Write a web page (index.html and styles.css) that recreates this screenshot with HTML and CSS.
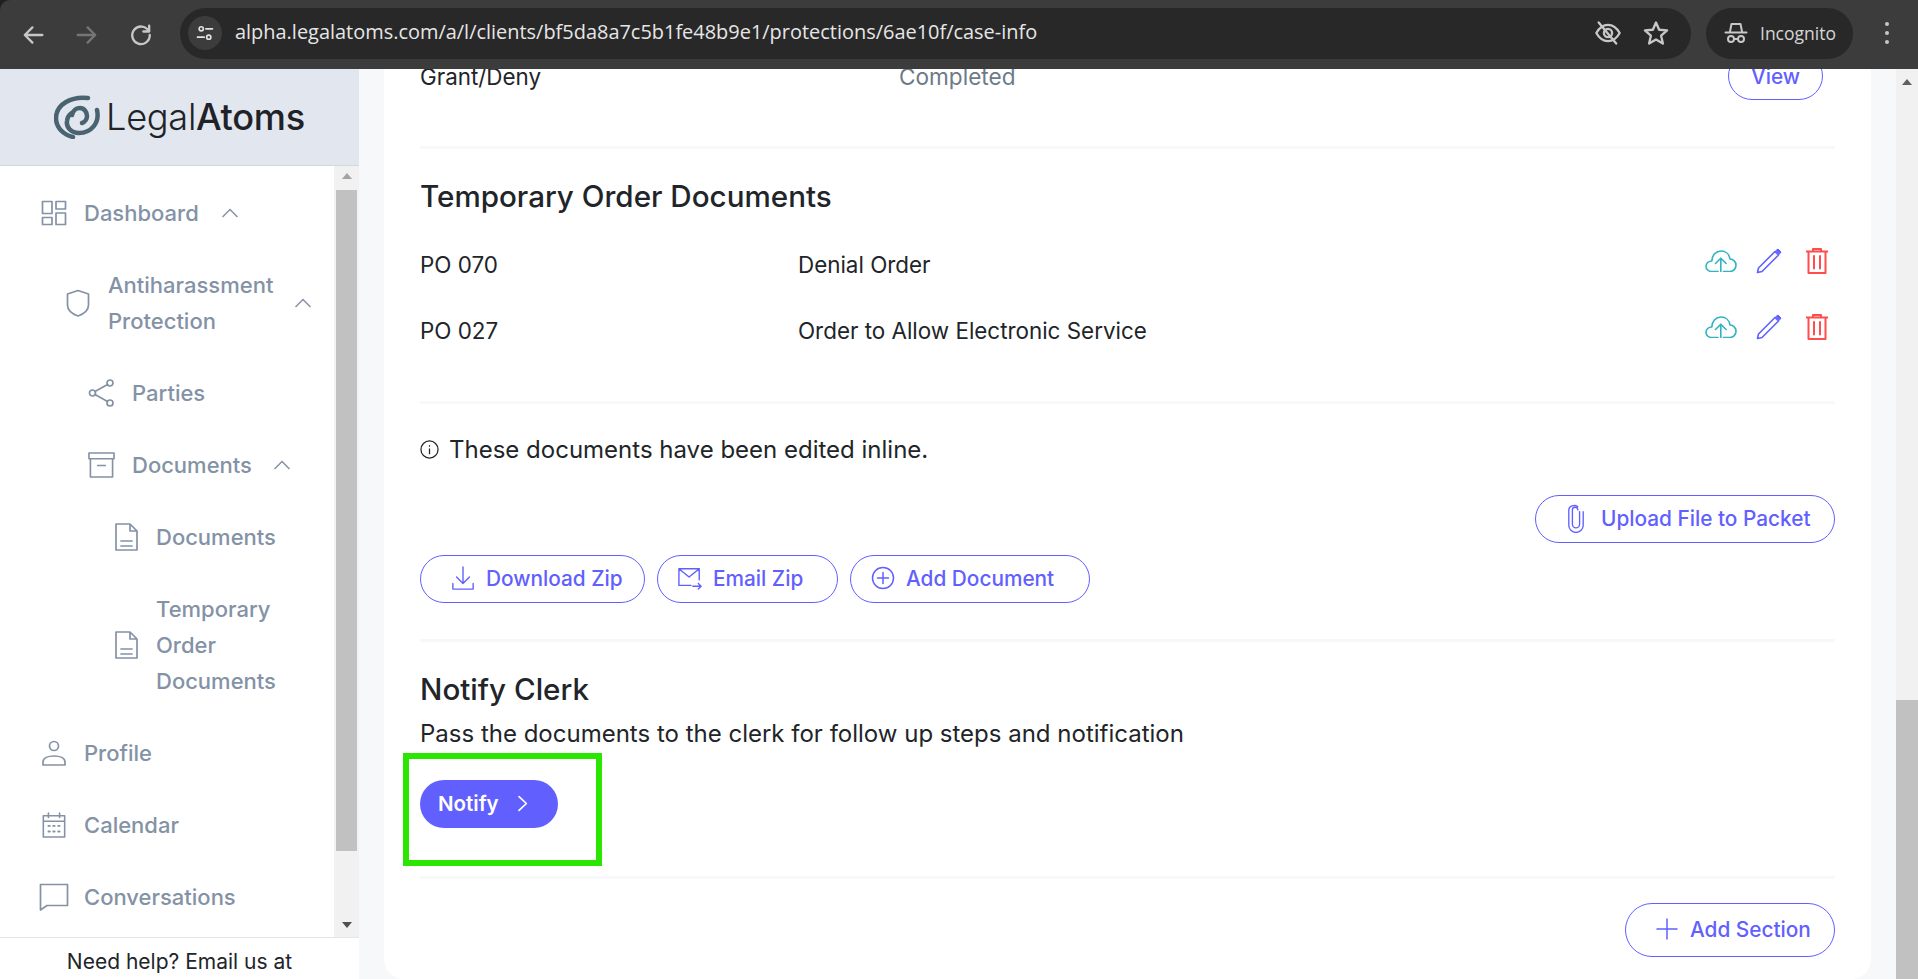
FILE: index.html
```html
<!DOCTYPE html>
<html lang="en">
<head>
<meta charset="utf-8">
<title>LegalAtoms</title>
<link rel="stylesheet" href="styles.css">
</head>
<body>
<header class="browser">
  <div class="nav-icons">
    <svg class="bi" viewBox="0 0 24 24"><path d="M20 12H5M11.500 5.500 5 12l6.500 6.500"/></svg>
    <svg class="bi dim" viewBox="0 0 24 24"><path d="M4 12h15M12.500 5.500 19 12l-6.500 6.500"/></svg>
    <svg class="bi" viewBox="0 0 24 24"><path d="M18.500 8.500A7.500 7.500 0 1 0 19.500 12M19 4v5h-5"/></svg>
  </div>
  <div class="omnibox">
    <span class="site-info"><svg class="bi small" viewBox="0 0 24 24"><circle cx="7.500" cy="7" r="2.500"/><path d="M13 7h8M3 17h8"/><circle cx="16.500" cy="17" r="2.500"/></svg></span>
    <span class="url">alpha.legalatoms.com/a/l/clients/bf5da8a7c5b1fe48b9e1/protections/6ae10f/case-info</span>
    <svg class="bi eye" viewBox="0 0 24 24"><path d="M2 12c2.500-4.500 6-7 10-7s7.500 2.500 10 7c-2.500 4.500-6 7-10 7s-7.500-2.500-10-7Z"/><circle cx="12" cy="12" r="3.500"/><path d="M4 3l15 18"/></svg>
    <svg class="bi star" viewBox="0 0 24 24"><path d="m12 3 2.700 6.200 6.800.6-5.100 4.500 1.500 6.700-5.900-3.500L6.100 21l1.500-6.700-5.100-4.500 6.800-.6Z"/></svg>
  </div>
  <div class="incognito">
    <svg class="bi hat" viewBox="0 0 24 24"><path d="M1.500 11.500h21M6 10.500 7.500 3h9l1.500 7.500"/><circle cx="7" cy="18" r="3"/><circle cx="17" cy="18" r="3"/><path d="M10 18h4"/></svg>
    <span>Incognito</span>
  </div>
  <div class="kebab"><i></i><i></i><i></i></div>
</header>

<div class="app">
  <aside class="sidebar">
    <div class="logo">
      <svg class="logo-mark" viewBox="0 0 46 44"><path d="M34 3C18 1 2 9 2 23c0 10 8 17 17 19"/><path d="M43 15c3 13-6 23-18 23-8 0-13-6-12-12 .5-4 2-6 4-7.500"/><path d="M18 20c1-5 5-7 8-7 4 0 7 4 7 8 0 3-2 6-5 7"/></svg>
      <span class="logo-text">Legal<b>Atoms</b></span>
    </div>
    <div class="nav-wrap">
      <nav class="nav">
        <a class="item l1"><svg class="ico" viewBox="0 0 26 26"><path d="M1.500 1.500h9.500v12H1.500ZM15 1.500h9.500v7.500H15ZM1.500 17.500h9.500v7H1.500ZM15 13h9.500v11.500H15Z"/></svg><span>Dashboard</span><svg class="chev" viewBox="0 0 16 10"><path d="M.500 9 8 1.500 15.500 9"/></svg></a>
        <a class="item l2"><svg class="ico shield" viewBox="0 0 24 28"><path d="M12 1.500 1.500 5v11c0 5 5 9 10.500 11 5.500-2 10.500-6 10.500-11V5Z"/></svg><span>Antiharassment<br>Protection</span><svg class="chev" viewBox="0 0 16 10"><path d="M.500 9 8 1.500 15.500 9"/></svg></a>
        <a class="item l3"><svg class="ico" viewBox="0 0 26 28"><circle cx="4" cy="14" r="3"/><circle cx="21.500" cy="4" r="3"/><circle cx="21.500" cy="24" r="3"/><path d="M6.500 12.500 19 5.500M6.500 15.500l12.500 7"/></svg><span>Parties</span></a>
        <a class="item l3"><svg class="ico" viewBox="0 0 28 28"><path d="M1 1.500h26v6H1ZM2.500 7.500v19h23v-19M10 14.500h8"/></svg><span>Documents</span><svg class="chev" viewBox="0 0 16 10"><path d="M.500 9 8 1.500 15.500 9"/></svg></a>
        <a class="item l4"><svg class="ico doc" viewBox="0 0 23 28"><path d="M1 1h14l7 7v19H1ZM15 1v7h7M6 18h11M6 23h11"/></svg><span>Documents</span></a>
        <a class="item l4"><svg class="ico doc" viewBox="0 0 23 28"><path d="M1 1h14l7 7v19H1ZM15 1v7h7M6 18h11M6 23h11"/></svg><span>Temporary<br>Order<br>Documents</span></a>
        <a class="item l1"><svg class="ico" viewBox="0 0 26 26"><circle cx="13" cy="6" r="4.500"/><path d="M2 25v-3c0-4 5-6 11-6s11 2 11 6v3Z"/></svg><span>Profile</span></a>
        <a class="item l1"><svg class="ico" viewBox="0 0 26 28"><path d="M1.500 4h23v23h-23ZM1.500 10h23M7 1v5M19 1v5"/><path class="dots" d="M7 15h1.500M12.200 15h1.500M17.500 15h1.500M7 21h1.500M12.200 21h1.500M17.500 21h1.500"/></svg><span>Calendar</span></a>
        <a class="item l1"><svg class="ico wide" viewBox="0 0 30 28"><path d="M1.500 1.500h27v21H8L1.500 27Z"/></svg><span>Conversations</span></a>
      </nav>
      <div class="side-scroll">
        <span class="arrow up"></span>
        <span class="thumb"></span>
        <span class="arrow down"></span>
      </div>
    </div>
    <div class="help">Need help? Email us at</div>
  </aside>

  <main class="main">
    <div class="card">
      <div class="status-row">
        <span class="col-a">Grant/Deny</span>
        <span class="col-b">Completed</span>
        <a class="btn view">View</a>
      </div>
      <hr class="rule rule-a">
      <h2 class="title t-order">Temporary Order Documents</h2>
      <div class="doc-row">
        <span class="doc-code">PO 070</span><span class="doc-name">Denial Order</span>
        <span class="doc-actions">
          <svg class="act cloud" viewBox="0 0 32 22.500"><path class="teal" d="M13 21.500H6.500C3.500 21.500 1 19.200 1 16.300 1 13.300 3.500 11 6.800 11 7 5.200 11 1 16 1c4.800 0 8.300 3.300 9 8 3.300 0 6 2.800 6 6.200 0 3.500-2.700 6.300-6 6.300h-6.500M15.800 21.500V9M10.500 13.500l5.300-5.300 5.300 5.300"/></svg>
          <svg class="act pen" viewBox="0 0 26 26"><path class="purple" d="M1.500 24.500 2.500 20 19 3.500l3.500 3.500L6 23.500Z"/><path class="purple-fill" d="M20 2.500 22 1l3 3-1.500 2Z"/></svg>
          <svg class="act bin" viewBox="0 0 22 26"><path class="red" d="M.500 3.500h21M7 3.500V1h8v2.500M2.500 3.500V25h17V3.500M8 8v12.500M14 8v12.500"/></svg>
        </span>
      </div>
      <div class="doc-row">
        <span class="doc-code">PO 027</span><span class="doc-name">Order to Allow Electronic Service</span>
        <span class="doc-actions">
          <svg class="act cloud" viewBox="0 0 32 22.500"><path class="teal" d="M13 21.500H6.500C3.500 21.500 1 19.200 1 16.300 1 13.300 3.500 11 6.800 11 7 5.200 11 1 16 1c4.800 0 8.300 3.300 9 8 3.300 0 6 2.800 6 6.200 0 3.500-2.700 6.300-6 6.300h-6.500M15.800 21.500V9M10.500 13.500l5.300-5.300 5.300 5.300"/></svg>
          <svg class="act pen" viewBox="0 0 26 26"><path class="purple" d="M1.500 24.500 2.500 20 19 3.500l3.500 3.500L6 23.500Z"/><path class="purple-fill" d="M20 2.500 22 1l3 3-1.500 2Z"/></svg>
          <svg class="act bin" viewBox="0 0 22 26"><path class="red" d="M.500 3.500h21M7 3.500V1h8v2.500M2.500 3.500V25h17V3.500M8 8v12.500M14 8v12.500"/></svg>
        </span>
      </div>
      <hr class="rule rule-b">
      <p class="info"><svg class="info-ico" viewBox="0 0 20 20"><circle cx="10" cy="10" r="9"/><path d="M10 9v6M10 5.500v1.500"/></svg>These documents have been edited inline.</p>
      <div class="upload-row">
        <a class="btn upload"><svg class="btn-ico clip" viewBox="0 0 20 30"><path d="M14 8v14a4 4 0 0 1-8 0V6a3 3 0 0 1 6 0" /><path d="M18 8v15a8 8 0 0 1-16 0V6a6 5 0 0 1 10-3.500"/></svg>Upload File to Packet</a>
      </div>
      <div class="btn-row">
        <a class="btn download"><svg class="btn-ico" viewBox="0 0 24 26"><path d="M12 1v17M5 12l7 7 7-7M1 19v6h22v-6"/></svg>Download Zip</a>
        <a class="btn email"><svg class="btn-ico" viewBox="0 0 26 26"><path d="M14 21H1V3h22v12M1 3l11 9 11-9M16 22h9M22 19l3 3-3 3"/></svg>Email Zip</a>
        <a class="btn add"><svg class="btn-ico" viewBox="0 0 24 24"><circle cx="12" cy="12" r="10.500"/><path d="M12 6.500v11M6.500 12h11"/></svg>Add Document</a>
      </div>
      <hr class="rule rule-c">
      <h2 class="title t-clerk">Notify Clerk</h2>
      <p class="lead">Pass the documents to the clerk for follow up steps and notification</p>
      <div class="notify-wrap">
        <a class="btn-solid">Notify<svg class="next" viewBox="0 0 10 15"><path d="M1.500 1.500 8 7.500l-6.500 6"/></svg></a>
        <span class="highlight"></span>
      </div>
      <hr class="rule rule-d">
      <div class="section-row">
        <a class="btn section"><svg class="btn-ico plus" viewBox="0 0 22 22"><path d="M11 1v20M1 11h20"/></svg>Add Section</a>
      </div>
    </div>
  </main>

  <div class="page-scroll">
    <span class="arrow up"></span>
    <span class="page-thumb"></span>
  </div>
</div>
</body>
</html>
```
FILE: styles.css
```css
* { box-sizing: border-box; }
html, body { margin: 0; height: 100%; overflow: hidden; }
body {
  width: 1918px;
  height: 979px;
  display: flex;
  flex-direction: column;
  font-family: Inter, "Liberation Sans", sans-serif;
  color: #212529;
  background: #202020;
}

/* Browser chrome */
.browser {
  height: 69px;
  flex: none;
  display: flex;
  align-items: center;
  background: #3c3c3c;
  border-radius: 10px 0 0 0;
}
.bi { fill: none; stroke: #c7c7c7; stroke-width: 2; stroke-linecap: round; stroke-linejoin: round; }
.nav-icons { display: flex; gap: 26px; padding-left: 19px; width: 180px; }
.nav-icons .bi { width: 28px; height: 28px; }
.nav-icons .dim { stroke: #757575; }
.omnibox {
  width: 1511px;
  height: 51px;
  margin-top: -3px;
  background: #282828;
  border-radius: 26px;
  display: flex;
  align-items: center;
  padding-left: 8px;
}
.site-info {
  width: 34px; height: 34px;
  border-radius: 50%;
  background: #3c3c3c;
  display: flex; align-items: center; justify-content: center;
}
.small { width: 20px; height: 20px; stroke: #e3e3e3; }
.url {
  margin-left: 13px;
  margin-top: -3px;
  font: 19.950px "Open Sans", "Noto Sans", sans-serif;
  color: #e6e6e6;
  flex: 1;
  white-space: nowrap;
}
.eye { width: 28px; height: 28px; margin-right: 20px; }
.star { width: 28px; height: 28px; margin-right: 21px; }
.incognito {
  margin-left: 15px;
  margin-top: -3px;
  width: 147px;
  height: 51px;
  background: #282828;
  border-radius: 26px;
  display: flex;
  align-items: center;
  padding-left: 18px;
  gap: 12px;
  font: 17.500px "Open Sans", "Noto Sans", sans-serif;
  color: #d6d6d6;
}
.hat { width: 24px; height: 24px; }
.kebab { margin-left: 32px; margin-top: -3px; display: flex; flex-direction: column; gap: 5px; }
.kebab i { width: 4px; height: 4px; border-radius: 50%; background: #c7c7c7; }

/* App frame */
.app { flex: 1; display: flex; min-height: 0; background: #f7f8fa; }

/* Sidebar */
.sidebar {
  width: 359px;
  flex: none;
  display: flex;
  flex-direction: column;
  background: #fff;
}
.logo {
  height: 97px;
  flex: none;
  display: flex;
  align-items: center;
  padding-left: 54px;
  background: #e2e7ef;
  border-bottom: 1px solid #d3d7de;
}
.logo-mark { width: 46px; height: 44px; fill: none; stroke: #4a6371; stroke-width: 4.500; stroke-linecap: round; }
.logo-text { margin-left: 6px; font-size: 36.200px; font-weight: 300; color: #1f2328; letter-spacing: -.3px; }
.logo-text b { font-weight: 500; }
.nav-wrap { flex: 1; min-height: 0; display: flex; border-bottom: 1px solid #e2e7ef; }
.nav {
  flex: 1;
  min-width: 0;
  padding-top: 11px;
  overflow: hidden;
}
.item {
  display: flex;
  align-items: center;
  padding: 18px 0;
  font-size: 22px;
  font-weight: 500;
  line-height: 36px;
  color: #8492a6;
}
.item span { white-space: nowrap; }
.ico { width: 26px; height: 26px; flex: none; fill: none; stroke: #8492a6; stroke-width: 1.700; stroke-linejoin: round; stroke-linecap: round; }
.ico .dots { stroke-width: 2; }
.l1 { padding-left: 41px; }
.l1 .ico { margin-right: 17px; }
.l1 .chev { margin-left: 23px; }
.l2 { padding-left: 66px; }
.l2 .ico { margin-right: 18px; }
.shield { width: 24px; height: 28px; }
.l3 { padding-left: 88px; }
.l3 .ico { margin-right: 17px; width: 27px; height: 28px; }
.l4 { padding-left: 115px; }
.l4 .doc { margin-right: 18px; width: 23px; height: 28px; }
.wide { width: 30px; margin-left: -2px; margin-right: 15px !important; height: 28px; }
.chev { width: 16px; height: 10px; margin-left: 22px; flex: none; fill: none; stroke: #8492a6; stroke-width: 1.500; }
.side-scroll {
  width: 25px;
  flex: none;
  background: #f1f1f1;
  display: flex;
  flex-direction: column;
  align-items: center;
  padding-top: 7px;
}
.thumb { width: 21px; height: 661px; margin-top: 11px; background: #c1c1c1; }
.arrow { width: 0; height: 0; border-left: 5px solid transparent; border-right: 5px solid transparent; }
.arrow.up { border-bottom: 6px solid #606060; }
.arrow.down { border-top: 6px solid #505050; margin-top: 71px; }
.side-scroll .up { border-bottom-color: #a3a3a3; }
.help {
  height: 41px;
  flex: none;
  text-align: center;
  font-size: 21px;
  line-height: 48px;
  color: #212529;
  overflow: hidden;
}

/* Main */
.main { flex: 1; min-width: 0; overflow: hidden; padding: 0 25px; }
.card {
  background: #fff;
  border-radius: 0 0 20px 20px;
  padding: 0 36px 22px;
  margin-top: -17px;
  height: 927px;
}
.status-row { height: 48px; display: flex; align-items: center; font-size: 22.400px; }
.col-a { width: 479px; }
.col-b { flex: 1; color: #6c7a89; font-size: 22.600px; }
.rule { border: 0; height: 3px; margin: 0; background: #f7f8fa; }
.rule-a { margin-top: 46px; }
.title { margin: 0; font-size: 29.600px; font-weight: 500; line-height: 34px; color: #212529; }
.t-order { margin-top: 30px; margin-bottom: 19px; }
.doc-row { height: 66px; padding-bottom: 2px; display: flex; align-items: center; font-size: 22.400px; }
.doc-code { width: 378px; }
.doc-name { flex: 1; }
.doc-actions { display: flex; align-items: center; margin-top: -6px; margin-right: 7px; }
.act { flex: none; fill: none; stroke-linecap: round; stroke-linejoin: round; }
.cloud { width: 32px; height: 22.500px; margin-right: 19px; }
.pen { width: 26px; height: 26px; margin-right: 24px; }
.bin { width: 22px; height: 26px; }
.teal { stroke: #2fb4c0; stroke-width: 1.600; }
.purple { stroke: #6160ff; stroke-width: 1.600; }
.purple-fill { fill: #6160ff; stroke: #6160ff; }
.red { stroke: #ff4d4d; stroke-width: 2; }
.rule-b { margin-top: 37px; }
.info { margin: 27px 0 0; height: 36px; display: flex; align-items: center; font-size: 24px; }
.info-ico { width: 19px; height: 19px; margin-right: 10px; fill: none; stroke: #212529; stroke-width: 1.300; }
.btn {
  display: inline-flex;
  align-items: center;
  height: 48px;
  padding-bottom: 2px;
  border: 1px solid #6160ff;
  border-radius: 24px;
  color: #6160ff;
  font-size: 20.800px;
  font-weight: 500;
  white-space: nowrap;
  background: #fff;
}
.view { width: 95px; justify-content: center; margin-right: 12px; padding-bottom: 0; }
.btn-ico { width: 24px; height: 24px; flex: none; margin-right: 11px; fill: none; stroke: #6160ff; stroke-width: 1.500; stroke-linecap: round; stroke-linejoin: round; }
.upload-row { margin-top: 28px; display: flex; justify-content: flex-end; }
.upload { width: 300px; padding-left: 31px; }
.clip { width: 18px; height: 30px; margin-right: 16px; }
.btn-row { margin-top: 12px; display: flex; gap: 12px; }
.download { width: 225px; padding-left: 30px; }
.email { width: 181px; padding-left: 20px; }
.add { width: 240px; padding-left: 20px; }
.rule-c { margin-top: 36px; }
.t-clerk { margin-top: 30px; }
.lead { margin: 10px 0 0; font-size: 24px; line-height: 36px; }
.notify-wrap { position: relative; margin-top: 28px; height: 48px; }
.btn-solid {
  display: inline-flex;
  align-items: center;
  width: 138px;
  height: 48px;
  padding-left: 18px;
  padding-bottom: 2px;
  border-radius: 24px;
  background: #6160ff;
  color: #fff;
  font-size: 20.500px;
  font-weight: 600;
}
.next { width: 12px; height: 17px; margin-left: 18px; fill: none; stroke: #fff; stroke-width: 1.500; stroke-linecap: round; stroke-linejoin: round; }
.highlight {
  position: absolute;
  left: -17px;
  top: -27px;
  width: 199px;
  height: 113px;
  border: 6px solid #2ae600;
  pointer-events: none;
}
.rule-d { margin-top: 48px; }
.section-row { margin-top: 24px; display: flex; justify-content: flex-end; }
.section { width: 210px; height: 54px; border-radius: 27px; padding-left: 30px; }
.plus { width: 22px; height: 22px; margin-right: 12px; }

/* Page scrollbar */
.page-scroll {
  width: 22px;
  flex: none;
  background: #f1f1f1;
  display: flex;
  flex-direction: column;
  align-items: center;
  padding-top: 10px;
}
.page-thumb { width: 100%; height: 279px; margin-top: 615px; background: #c1c1c1; }
```
